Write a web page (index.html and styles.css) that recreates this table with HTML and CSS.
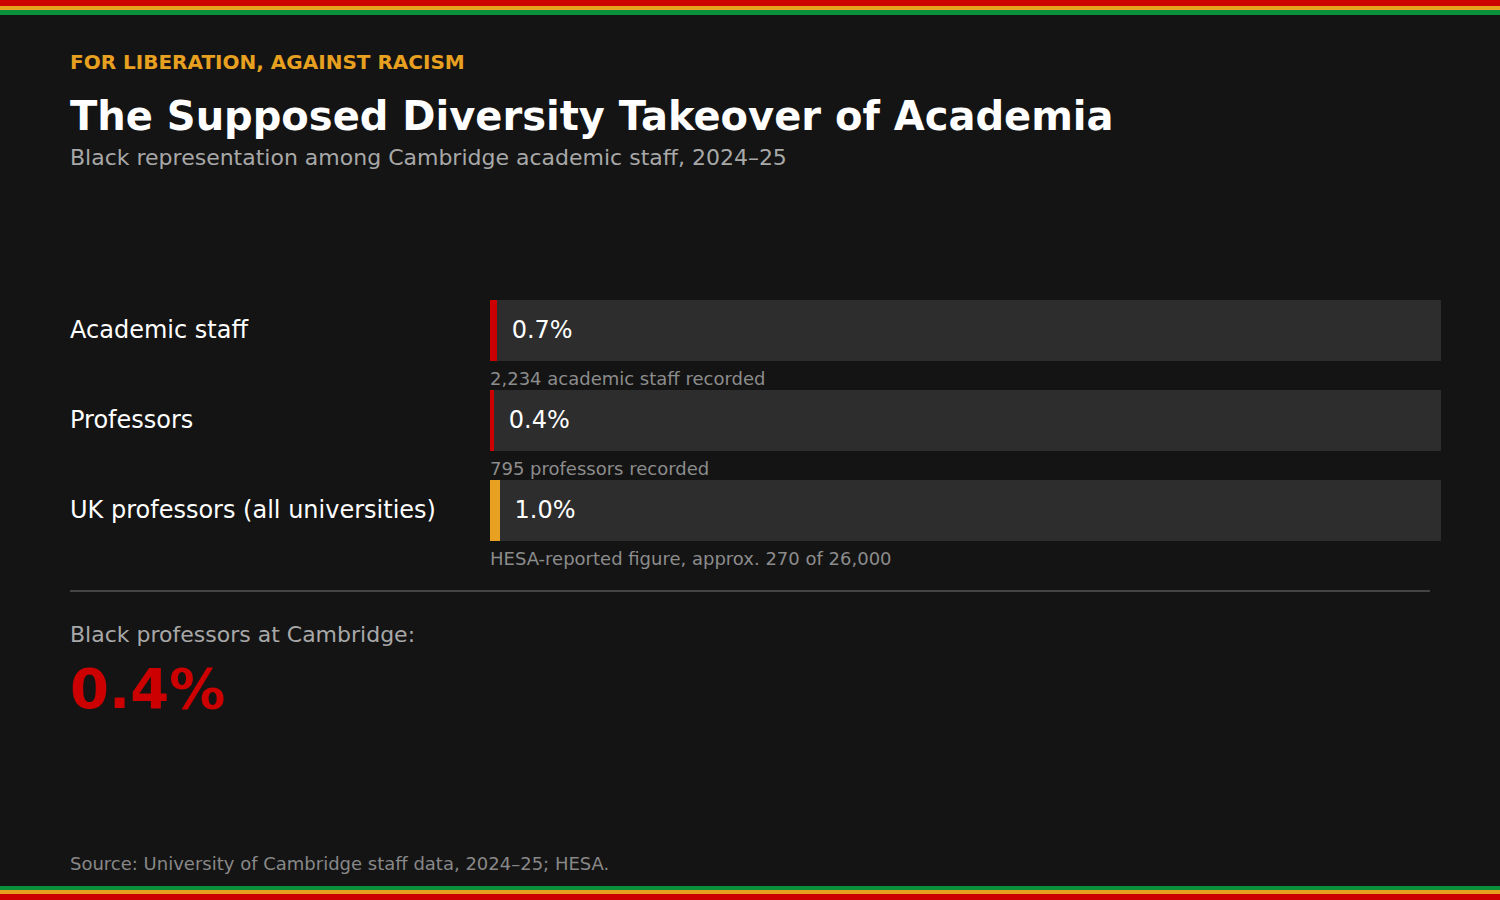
FILE: index.html
```html
<!DOCTYPE html>
<html lang="en">
<head>
<meta charset="utf-8">
<title>The Supposed Diversity Takeover of Academia</title>
<link rel="stylesheet" href="styles.css">
</head>
<body>
<div class="page">
  <div class="stripes stripes-top">
    <div class="s red s6"></div>
    <div class="s yellow s4"></div>
    <div class="s green s5"></div>
  </div>
  <main class="content">
    <header class="head">
      <div class="kicker">FOR LIBERATION, AGAINST RACISM</div>
      <h1 class="title">The Supposed Diversity Takeover of Academia</h1>
      <div class="subtitle">Black representation among Cambridge academic staff, 2024–25</div>
    </header>

    <section class="chart">
      <div class="row">
        <div class="label">Academic staff</div>
        <div class="track">
          <div class="fill red" style="width:0.7%"></div>
          <div class="value">0.7%</div>
        </div>
        <div class="spacer"></div>
        <div class="note">2,234 academic staff recorded</div>
      </div>
      <div class="row">
        <div class="label">Professors</div>
        <div class="track">
          <div class="fill red" style="width:0.4%"></div>
          <div class="value">0.4%</div>
        </div>
        <div class="spacer"></div>
        <div class="note">795 professors recorded</div>
      </div>
      <div class="row">
        <div class="label">UK professors (all universities)</div>
        <div class="track">
          <div class="fill yellow" style="width:1.0%"></div>
          <div class="value">1.0%</div>
        </div>
        <div class="spacer"></div>
        <div class="note">HESA-reported figure, approx. 270 of 26,000</div>
      </div>
    </section>

    <hr class="divider">

    <section class="callout">
      <div class="callout-label">Black professors at Cambridge:</div>
      <div class="callout-value">0.4%</div>
    </section>

    <div class="grow"></div>
    <footer class="source">Source: University of Cambridge staff data, 2024–25; HESA.</footer>
  </main>
  <div class="stripes stripes-bottom">
    <div class="s green s4"></div>
    <div class="s yellow s4"></div>
    <div class="s red s6"></div>
  </div>
</div>
</body>
</html>
```

FILE: styles.css
```css
* { box-sizing: border-box; }
html, body { margin: 0; padding: 0; }
body {
  background: #141414;
  color: #ffffff;
  font-family: "DejaVu Sans", "Liberation Sans", sans-serif;
}
.page {
  width: 1500px;
  height: 900px;
  display: flex;
  flex-direction: column;
  overflow: hidden;
}
.stripes { display: flex; flex-direction: column; flex: none; }
.s { width: 100%; }
.s4 { height: 4px; }
.s5 { height: 5px; }
.s6 { height: 6px; }
.red { background: #cc0000; }
.yellow { background: #e8a020; }
.green { background: #0a8f3a; }

.content {
  flex: 1;
  display: flex;
  flex-direction: column;
  padding: 0 70px;
}
.head { padding-top: 35px; }
.kicker {
  color: #e8a020;
  font-weight: bold;
  font-size: 20px;
  line-height: 24px;
}
.title {
  margin: 19px 0 0;
  font-size: 40px;
  line-height: 46px;
  font-weight: bold;
  color: #ffffff;
}
.subtitle {
  margin-top: 6px;
  font-size: 22px;
  line-height: 26px;
  color: #a8a8a8;
}

.chart {
  margin-top: 129px;
  display: flex;
  flex-direction: column;
}
.row {
  display: grid;
  grid-template-columns: 420px 951px;
  grid-template-rows: 61px 29px;
  align-items: center;
}
.label {
  font-size: 24px;
  line-height: 28px;
  color: #ffffff;
  padding-bottom: 2px;
}
.track {
  height: 61px;
  background: #2d2d2d;
  display: flex;
  align-items: center;
}
.fill { height: 100%; flex: none; }
.value {
  padding-left: 15px;
  padding-bottom: 2px;
  font-size: 24px;
  line-height: 28px;
  color: #ffffff;
}
.note {
  align-self: start;
  padding-top: 8px;
  font-size: 18px;
  line-height: 20px;
  color: #8c8c8c;
}
.divider {
  margin: 20px 0 0;
  width: 1360px;
  height: 2px;
  border: 0;
  background: #444444;
}
.callout { margin-top: 30px; }
.callout-label {
  font-size: 22px;
  line-height: 26px;
  color: #a8a8a8;
}
.callout-value {
  margin-top: 9px;
  font-size: 56px;
  line-height: 64px;
  font-weight: bold;
  color: #cc0000;
}
.grow { flex: 1; }
.source {
  font-size: 18px;
  line-height: 20px;
  color: #888888;
  margin-bottom: 12px;
}
```
